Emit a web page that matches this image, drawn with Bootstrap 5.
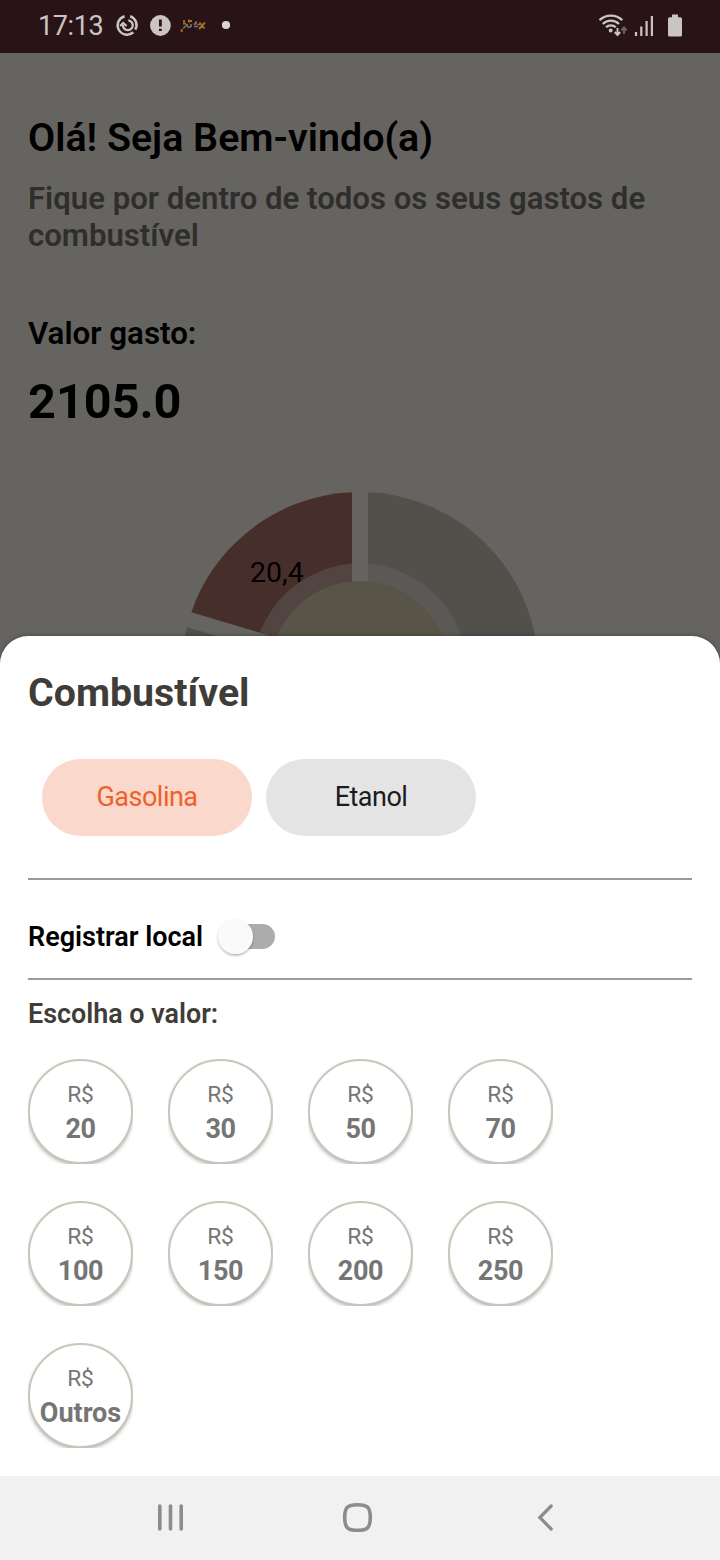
<!DOCTYPE html>
<html lang="pt-BR">
<head>
<meta charset="utf-8">
<meta name="viewport" content="width=device-width, initial-scale=1">
<title>Combustível</title>
<link href="https://cdn.jsdelivr.net/npm/bootstrap@5.3.0/dist/css/bootstrap.min.css" rel="stylesheet">
<style>
  body { font-family: Roboto, sans-serif; background: #666460; color: #000; width: 720px; height: 1560px; overflow: hidden; }
  .status { height: 53px; background: #281417; color: #cbc4c5; padding: 0 36px 0 38px; }
  .clock { font-size: 27px; line-height: 53px; width: 77px; letter-spacing: -.4px; }
  .status svg, .sysnav svg { display: block; }
  .home { height: 583px; padding: 62px 28px 0; overflow: hidden; }
  .hello { font-size: 39.4px; line-height: 46px; font-weight: 600; }
  .lede { font-size: 31.15px; line-height: 37px; font-weight: 600; color: #2f2e2c; margin: 19px -10px 0 0; }
  .spent { font-size: 31.3px; line-height: 36px; font-weight: 600; margin-top: 62px; }
  .total { font-size: 48.6px; line-height: 58px; font-weight: 700; margin-top: 21px; }
  .chart { display: block; margin: 39px auto 0; font-size: 28.5px; }
  .sheet { height: 840px; border-radius: 28px 28px 0 0; padding: 34px 28px 0; box-shadow: 0 0 4px rgba(0,0,0,.35); position: relative; }
  .sheet-title { font-size: 39.3px; line-height: 46px; font-weight: 700; color: #403c37; }
  .fuels { margin: 43px 0 0 14px; gap: 14px; }
  .fuel { width: 210px; height: 77px; font-size: 27px; letter-spacing: -.5px; border: 0; background: #e4e4e4; color: #1c1c1c; padding: 0; }
  .fuel.on { background: #fad8cc; color: #f15f2b; }
  .rule { height: 2px; background: #9b9b9b; }
  .local { height: 98px; padding-top: 16px; gap: 13px; font-size: 27px; font-weight: 600; }
  .ask { font-size: 26.9px; line-height: 32px; font-weight: 600; color: #403c37; margin-top: 18px; }
  .values { display: grid; grid-template-columns: repeat(4, 140px); grid-auto-rows: 142px; margin-top: 29px; }
  .coin { width: 105px; height: 105px; overflow: hidden; }
  .coin-face { width: 105px; height: 105px; border: 2px solid #cbc5ba; background: #fff; color: #757575; box-shadow: 0 2px 4px -1px rgba(0,0,0,.4); padding-top: 18px; }
  .cur { font-size: 22.8px; line-height: 32px; letter-spacing: -.2px; }
  .amt { font-size: 27px; line-height: 36px; font-weight: 700; white-space: nowrap; letter-spacing: -.4px; }
  .amt.word { letter-spacing: 0; }
  .sysnav { height: 84px; background: #f1f1f1; position: relative; }
</style>
</head>
<body>
<header class="status d-flex align-items-center">
  <span class="clock">17:13</span>
  <svg width="120" height="53" viewBox="115 0 120 53">
    <g fill="none" stroke="#cbc4c5">
      <path stroke-width="2.500" d="M124.600 16.200A9.400 9.400 0 1 0 133.300 32.300M130.200 16.200A9.400 9.400 0 0 1 135.300 29.700"/>
      <path stroke-width="2.300" d="M128.300 20.400A4.900 4.900 0 1 1 123 24.500"/>
      <path stroke-width="2.100" d="M120 26L123.200 22.900L126.600 26"/>
    </g>
    <circle cx="160.400" cy="25.500" r="10.400" fill="#cbc4c5"/>
    <path d="M160.400 19.500V26.500M160.400 28.700V31" stroke="#281417" stroke-width="2.800"/>
    <path d="M181.700 29v3M183 23.500h3M184 20v2M188 21h4M189 19.500v3M186 25h2M199.500 22.500l5 6M205 22.500l-6 6.500M195 22.500h2" stroke="#a2711d" stroke-width="1.900" fill="none"/>
    <path d="M183 28.500l4-3.500M187 27h4M191 24v3M193.500 24h3M194 26.500h4M197.500 24.500h2.500" stroke="#79777e" stroke-width="1.500" fill="none"/>
    <circle cx="226" cy="25" r="4.100" fill="#dad5d6"/>
  </svg>
  <svg class="ms-auto" width="88" height="53" viewBox="596 0 88 53">
    <g fill="none" stroke="#cbc4c5" stroke-width="2.300">
      <path d="M599.500 20.200A16.400 16.400 0 0 1 622.300 20.200M602.800 24A11.600 11.600 0 0 1 619 24M606 27.300A7 7 0 0 1 615.800 27.300"/>
    </g>
    <circle cx="610.700" cy="30.500" r="1.900" fill="#cbc4c5"/>
    <path d="M617.500 28V34.500M614.800 32L617.500 35L620.200 32" fill="none" stroke="#cbc4c5" stroke-width="1.900"/>
    <path d="M624 34V28M621.300 30.500L624 27.500L626.700 30.500" fill="none" stroke="#6d6063" stroke-width="1.900"/>
    <path d="M636 32v4M641.300 26.500v9.500M646.600 21v15M651.900 16v20" stroke="#cbc4c5" stroke-width="2.200"/>
    <path d="M672 14.500h6v2.800h2.500q1.500 0 1.500 1.500v16.200q0 1.500-1.500 1.500h-11q-1.500 0-1.500-1.500v-16.200q0-1.500 1.500-1.500h2.500z" fill="#cbc4c5"/>
  </svg>
</header>

<main class="home">
  <div class="hello">Olá! Seja Bem-vindo(a)</div>
  <div class="lede">Fique por dentro de todos os seus gastos de combustível</div>
  <div class="spent">Valor gasto:</div>
  <div class="total">2105.0</div>
  <svg class="chart" width="380" height="190" viewBox="170 470 380 190">
    <defs>
      <clipPath id="right"><path d="M368 470H550V660H368z"/></clipPath>
      <clipPath id="left"><path d="M352 470V660L170 606V470z"/></clipPath>
      <clipPath id="low"><path d="M170 622L300 661H170z"/></clipPath>
    </defs>
    <circle cx="360" cy="670.500" r="107" fill="#656361"/>
    <g clip-path="url(#right)"><circle cx="360" cy="670.500" r="178.500" fill="#51504a"/><circle cx="360" cy="670.500" r="107" fill="#5a5955"/></g>
    <g clip-path="url(#left)"><circle cx="360" cy="670.500" r="178.500" fill="#462f2b"/><circle cx="360" cy="670.500" r="107" fill="#524541"/></g>
    <g clip-path="url(#low)"><circle cx="360" cy="670.500" r="178.500" fill="#51504a"/></g>
    <circle cx="360" cy="670.500" r="89.500" fill="#585448"/>
    <text x="250" y="582">20,4</text>
  </svg>
</main>

<section class="sheet bg-white">
  <div class="sheet-title">Combustível</div>
  <div class="fuels d-flex">
    <button class="fuel on rounded-pill">Gasolina</button>
    <button class="fuel rounded-pill">Etanol</button>
  </div>
  <div class="rule" style="margin-top:42px"></div>
  <div class="local d-flex align-items-center">
    <span>Registrar local</span>
    <svg width="60" height="44" viewBox="216 915 60 44">
      <defs><filter id="sh" x="-30%" y="-30%" width="160%" height="160%"><feDropShadow dx="0" dy="1.500" stdDeviation="1.200" flood-opacity=".32"/></filter></defs>
      <rect x="224" y="924" width="51" height="25" rx="12.500" fill="#acacac"/>
      <circle cx="235.500" cy="936.500" r="17.500" fill="#fafafa" filter="url(#sh)"/>
    </svg>
  </div>
  <div class="rule"></div>
  <div class="ask">Escolha o valor:</div>
  <div class="values text-center">
    <div class="coin"><div class="coin-face rounded-circle"><div class="cur">R$</div><div class="amt">20</div></div></div>
    <div class="coin"><div class="coin-face rounded-circle"><div class="cur">R$</div><div class="amt">30</div></div></div>
    <div class="coin"><div class="coin-face rounded-circle"><div class="cur">R$</div><div class="amt">50</div></div></div>
    <div class="coin"><div class="coin-face rounded-circle"><div class="cur">R$</div><div class="amt">70</div></div></div>
    <div class="coin"><div class="coin-face rounded-circle"><div class="cur">R$</div><div class="amt">100</div></div></div>
    <div class="coin"><div class="coin-face rounded-circle"><div class="cur">R$</div><div class="amt">150</div></div></div>
    <div class="coin"><div class="coin-face rounded-circle"><div class="cur">R$</div><div class="amt">200</div></div></div>
    <div class="coin"><div class="coin-face rounded-circle"><div class="cur">R$</div><div class="amt">250</div></div></div>
    <div class="coin"><div class="coin-face rounded-circle"><div class="cur">R$</div><div class="amt word">Outros</div></div></div>
  </div>
</section>

<nav class="sysnav">
  <svg width="720" height="84" viewBox="0 1476 720 84" fill="none" stroke="#8c8c8c" stroke-width="3.600" stroke-linecap="round">
    <path d="M159.800 1506V1529M170.500 1506V1529M181.200 1506V1529"/>
    <path d="M357.500 1504.700C367.500 1504.700 370.300 1507.500 370.300 1517.500S367.500 1530.300 357.500 1530.300S344.700 1527.500 344.700 1517.500S347.500 1504.700 357.500 1504.700Z"/>
    <path stroke-linejoin="miter" stroke-width="3.200" d="M551.200 1506L539.800 1517.500L551.200 1529"/>
  </svg>
</nav>
<script src="https://cdn.jsdelivr.net/npm/bootstrap@5.3.0/dist/js/bootstrap.bundle.min.js"></script>
</body>
</html>
